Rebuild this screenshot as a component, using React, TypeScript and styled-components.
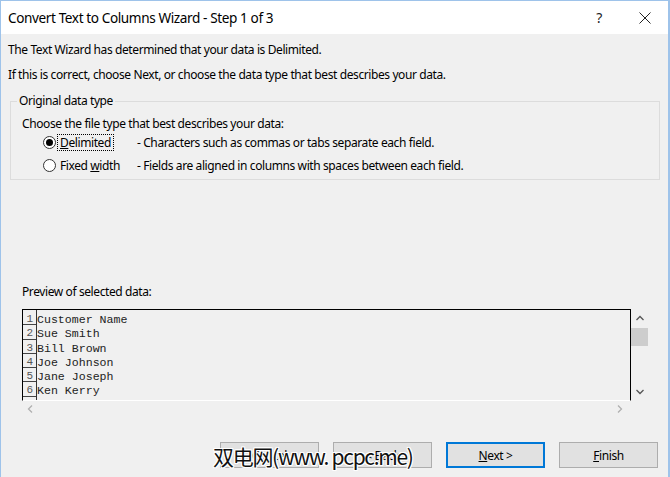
import React from "react";
import styled, { createGlobalStyle } from "styled-components";

const Global = createGlobalStyle`
  html, body { margin: 0; padding: 0; background: #f0f0f0; }
  #root { width: 670px; height: 477px; }
  * { box-sizing: border-box; }
`;

const UI = `"Noto Sans", "Liberation Sans", sans-serif`;
const MONO = `"Liberation Mono", "Courier New", monospace`;

const Window = styled.div`
  position: relative;
  width: 670px;
  height: 477px;
  display: flex;
  flex-direction: column;
  background: #f0f0f0;
  border-top: 1px solid #9ec3ea;
  border-left: 1px solid #9ec3ea;
  border-right: 2px solid #9ec3ea;
  font-family: ${UI};
  font-size: 12px;
  letter-spacing: -0.4px;
  color: #000;
  overflow: hidden;
`;

const TitleBar = styled.div`
  height: 33px;
  flex: none;
  background: #fff;
  display: flex;
  align-items: center;
  padding-left: 7px;
`;

const Title = styled.div`
  flex: 1;
  font-size: 13.6px;
  color: #000;
`;

const TitleButton = styled.div<{ $w: number }>`
  width: ${(p) => p.$w}px;
  height: 33px;
  display: flex;
  align-items: center;
  justify-content: center;
  color: #222;
  font-size: 14px;
`;

const Body = styled.div`
  flex: 1;
  display: flex;
  flex-direction: column;
  padding: 0 9px 0 7px;
`;

const Line = styled.div<{ $mt: number; $ml?: number; $h?: number }>`
  line-height: ${(p) => p.$h ?? 16}px;
  height: ${(p) => p.$h ?? 16}px;
  margin-top: ${(p) => p.$mt}px;
  margin-left: ${(p) => p.$ml ?? 0}px;
  white-space: nowrap;
`;

const Group = styled.fieldset`
  margin: 10px 0 0 2px;
  width: 650px;
  border: 1px solid #dcdcdc;
  padding: 7px 0 2px 11px;
  min-width: 0;
`;

const Legend = styled.legend`
  padding: 0 2px;
  margin-left: -5px;
  line-height: 16px;
  font-size: 12px;
`;

const RadioRow = styled.div`
  height: 23px;
  display: flex;
  align-items: center;
  padding-left: 21px;
`;

const Radio = styled.span<{ $checked?: boolean }>`
  width: 13px;
  height: 13px;
  border-radius: 50%;
  border: 1px solid #333;
  background: #fff;
  display: flex;
  align-items: center;
  justify-content: center;
  flex: none;
  &::after {
    content: "";
    display: ${(p) => (p.$checked ? "block" : "none")};
    width: 7px;
    height: 7px;
    border-radius: 50%;
    background: #000;
  }
`;

const RadioLabelCol = styled.span`
  width: 81px;
  flex: none;
  padding-left: 2px;
  display: flex;
`;

const RadioLabel = styled.span<{ $focus?: boolean }>`
  padding: 0 2px;
  line-height: 15px;
  outline: ${(p) => (p.$focus ? "1px dotted #000" : "none")};
`;

const U = styled.span`
  text-decoration: underline;
`;

const Desc = styled.span`
  white-space: nowrap;
`;

const Preview = styled.div`
  margin: 9px 0 0 14px;
  width: 626px;
  height: 108px;
  display: grid;
  grid-template-columns: 609px 17px;
  grid-template-rows: 92px 16px;
  letter-spacing: 0;
`;

const DataBox = styled.div`
  border: 1px solid #000;
  border-bottom: 1px solid #fff;
  display: flex;
  overflow: hidden;
`;

const NumCol = styled.div`
  width: 14px;
  flex: none;
  border-right: 1px solid #333;
  padding-top: 1px;
`;

const NumCell = styled.div`
  height: 14.25px;
  border-bottom: 1px solid #444;
  font-family: ${MONO};
  font-size: 11px;
  line-height: 16px;
  color: #555;
  text-align: right;
  padding-right: 3px;
`;

const DataCol = styled.div`
  flex: 1;
  padding-top: 1px;
`;

const DataCell = styled.div`
  height: 14.25px;
  font-family: ${MONO};
  font-size: 11.6px;
  line-height: 17px;
  color: #222;
  white-space: pre;
`;

const VScroll = styled.div`
  display: flex;
  flex-direction: column;
  align-items: center;
  padding: 5px 0 4px;
`;

const Thumb = styled.div`
  width: 17px;
  height: 18px;
  margin-top: 4px;
  background: #cdcdcd;
`;

const ScrollSpacer = styled.div`
  flex: 1;
`;

const HScroll = styled.div`
  display: flex;
  align-items: center;
  justify-content: space-between;
  padding: 0 6px 0 4px;
`;

const Buttons = styled.div`
  margin-top: 25px;
  display: flex;
  justify-content: flex-end;
  gap: 14px;
  padding-right: 1px;
`;

const Button = styled.div<{ $default?: boolean }>`
  width: 99px;
  height: 26px;
  padding-top: 1px;
  background: #e1e1e1;
  border: ${(p) => (p.$default ? "2px solid #0078d7" : "1px solid #adadad")};
  display: flex;
  align-items: center;
  justify-content: center;
  font-size: 12px;
  color: #000;
`;

const Watermark = styled.div`
  position: absolute;
  left: 212px;
  top: 441px;
  font-family: "Noto Sans CJK SC", "Noto Sans", sans-serif;
  font-size: 21px;
  line-height: 28px;
  color: #111;
  white-space: nowrap;
  letter-spacing: -1.3px;
  text-shadow: 1px 1px 0 #fff, -1px -1px 0 #fff, 1px -1px 0 #fff, -1px 1px 0 #fff,
    0 1px 0 #fff, 1px 0 0 #fff, 0 -1px 0 #fff, -1px 0 0 #fff;
`;

const Chevron = ({ dir, color }: { dir: "up" | "down" | "left" | "right"; color: string }) => {
  const paths: Record<string, string> = {
    up: "M1.5 6 L5 2.5 L8.5 6",
    down: "M1.5 3 L5 6.5 L8.5 3",
    left: "M6 1.5 L2.5 5 L6 8.5",
    right: "M3 1.5 L6.5 5 L3 8.5",
  };
  return (
    <svg width="10" height="10" viewBox="0 0 10 10">
      <path d={paths[dir]} fill="none" stroke={color} strokeWidth="1.3" />
    </svg>
  );
};

const rows = ["Customer Name", "Sue Smith", "Bill Brown", "Joe Johnson", "Jane Joseph", "Ken Kerry"];

export default function App() {
  return (
    <>
      <Global />
      <Window>
        <TitleBar>
          <Title>Convert Text to Columns Wizard - Step 1 of 3</Title>
          <TitleButton $w={46}>?</TitleButton>
          <TitleButton $w={46}>
            <svg width="12" height="12" viewBox="0 0 12 12">
              <path d="M0.5 0.5 L11.5 11.5 M11.5 0.5 L0.5 11.5" stroke="#222" strokeWidth="1" fill="none" />
            </svg>
          </TitleButton>
        </TitleBar>
        <Body>
          <Line $mt={8}>The Text Wizard has determined that your data is Delimited.</Line>
          <Line $mt={9}>If this is correct, choose Next, or choose the data type that best describes your data.</Line>
          <Group>
            <Legend>Original data type</Legend>
            <Line $mt={0} $h={15}>Choose the file type that best describes your data:</Line>
            <RadioRow>
              <Radio $checked />
              <RadioLabelCol>
                <RadioLabel $focus>
                  <U>D</U>elimited
                </RadioLabel>
              </RadioLabelCol>
              <Desc>- Characters such as commas or tabs separate each field.</Desc>
            </RadioRow>
            <RadioRow>
              <Radio />
              <RadioLabelCol>
                <RadioLabel>
                  Fixed <U>w</U>idth
                </RadioLabel>
              </RadioLabelCol>
              <Desc>- Fields are aligned in columns with spaces between each field.</Desc>
            </RadioRow>
          </Group>
          <Line $mt={104} $ml={14}>Preview of selected data:</Line>
          <Preview>
            <DataBox>
              <NumCol>
                {rows.map((_, i) => (
                  <NumCell key={i}>{i + 1}</NumCell>
                ))}
              </NumCol>
              <DataCol>
                {rows.map((r) => (
                  <DataCell key={r}>{r}</DataCell>
                ))}
              </DataCol>
            </DataBox>
            <VScroll>
              <Chevron dir="up" color="#555" />
              <Thumb />
              <ScrollSpacer />
              <Chevron dir="down" color="#555" />
            </VScroll>
            <HScroll>
              <Chevron dir="left" color="#b0b0b0" />
              <Chevron dir="right" color="#b0b0b0" />
            </HScroll>
            <div />
          </Preview>
          <Buttons>
            <Button>Cancel</Button>
            <Button>
              &lt;&nbsp;<U>B</U>ack
            </Button>
            <Button $default>
              <U>N</U>ext &gt;
            </Button>
            <Button>
              <U>F</U>inish
            </Button>
          </Buttons>
        </Body>
        <Watermark>双电网(www. pcpc.me)</Watermark>
      </Window>
    </>
  );
}
